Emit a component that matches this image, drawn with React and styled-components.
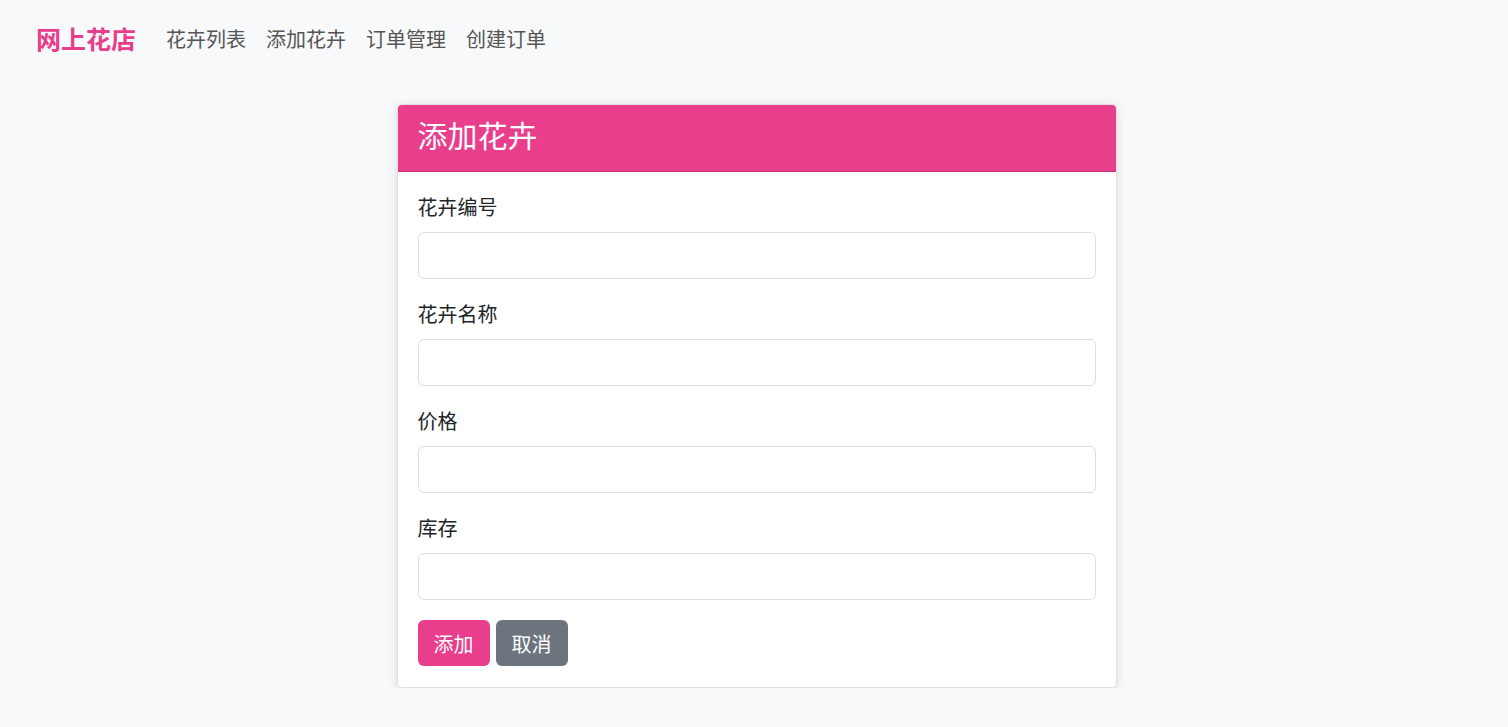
import React from 'react'
import styled, { createGlobalStyle } from 'styled-components'

const GlobalStyle = createGlobalStyle`
  body {
    margin: 0;
    background-color: #f8f9fa;
    font-family: "Noto Sans CJK SC", "Noto Sans", sans-serif;
    color: #212529;
  }
`

const fields = ['花卉编号', '花卉名称', '价格', '库存']

function App() {
  return (
    <>
      <GlobalStyle />
      <Navbar>
        <Brand>网上花店</Brand>
        <NavLink>花卉列表</NavLink>
        <NavLink>添加花卉</NavLink>
        <NavLink>订单管理</NavLink>
        <NavLink>创建订单</NavLink>
      </Navbar>
      <Main>
        <Card>
          <CardHeader>
            <Title>添加花卉</Title>
          </CardHeader>
          <CardBody>
            {fields.map((f) => (
              <FormGroup key={f}>
                <Label>{f}</Label>
                <Input type="text" />
              </FormGroup>
            ))}
            <Buttons>
              <Button $variant="primary">添加</Button>
              <Button $variant="secondary">取消</Button>
            </Buttons>
          </CardBody>
        </Card>
      </Main>
    </>
  )
}

const Navbar = styled.nav`
  display: flex;
  align-items: center;
  height: 78px;
  padding: 0 36px 1px;
  box-sizing: border-box;
`

const Brand = styled.a`
  font-size: 25px;
  font-weight: bold;
  color: #e83e8c;
  line-height: 1.5;
  margin-right: 20px;
`

const NavLink = styled.a`
  font-size: 20px;
  line-height: 1.5;
  color: #555;
  padding: 0 10px;
`

const Main = styled.div`
  display: flex;
  justify-content: center;
  padding: 26px 0 0 5px;
`

const Card = styled.div`
  width: 720px;
  box-sizing: border-box;
  background: #fff;
  border: 1px solid rgba(0, 0, 0, 0.125);
  border-radius: 5px;
  box-shadow: 0 2px 10px rgba(0, 0, 0, 0.12);
  overflow: hidden;
`

const CardHeader = styled.div`
  background-color: #e83e8c;
  color: #fff;
  padding: 11px 20px 19px;
  border-bottom: 1px solid rgba(0, 0, 0, 0.125);
`

const Title = styled.h4`
  margin: 0;
  font-size: 30px;
  font-weight: 400;
  line-height: 36px;
`

const CardBody = styled.div`
  padding: 20px 20px 21px;
`

const FormGroup = styled.div`
  margin-bottom: 20px;
`

const Label = styled.label`
  display: block;
  font-size: 20px;
  line-height: 30px;
  margin-bottom: 10px;
`

const Input = styled.input`
  display: block;
  width: 100%;
  height: 47px;
  box-sizing: border-box;
  border: 1px solid #dcdfe3;
  border-radius: 6px;
  padding: 0 15px;
  font-size: 20px;
  font-family: inherit;
  background: #fff;
`

const Buttons = styled.div`
  display: flex;
  gap: 6px;
`

const Button = styled.button`
  height: 46px;
  padding: 0 15px;
  font-size: 20px;
  font-family: inherit;
  color: #fff;
  border: 1px solid transparent;
  border-radius: 6px;
  background-color: ${(p) => (p.$variant === 'primary' ? '#e83e8c' : '#6c757d')};
`

export default App
